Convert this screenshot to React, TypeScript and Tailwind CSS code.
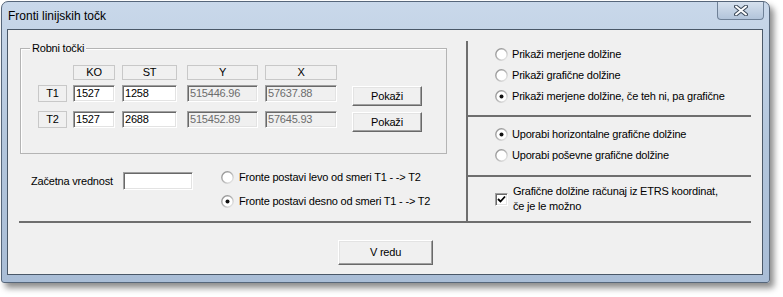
import React, { useId } from 'react';

const sunken =
  'border border-t-[#a0a0a0] border-l-[#a0a0a0] border-b-white border-r-white shadow-[inset_1px_1px_0_#696969,inset_-1px_-1px_0_#e3e3e3]';
const raised =
  'border border-t-white border-l-white border-b-[#696969] border-r-[#696969] shadow-[inset_-1px_-1px_0_#a0a0a0,inset_1px_1px_0_#e3e3e3] bg-[#f0f0f0]';

const Radio: React.FC<{ checked?: boolean }> = ({ checked }) => {
  const id = useId();
  return (
    <svg width="13" height="13" viewBox="0 0 13 13" className="shrink-0">
      <defs>
        <linearGradient id={id} x1="0" y1="0" x2="1" y2="1">
          <stop offset="0" stopColor="#8c8c8c" />
          <stop offset="0.5" stopColor="#b4b4b4" />
          <stop offset="1" stopColor="#f2f2f2" />
        </linearGradient>
      </defs>
      <circle cx="6.5" cy="6.5" r="5.7" fill="#fff" stroke={`url(#${id})`} strokeWidth="1.4" />
      {checked && <circle cx="6.5" cy="6.5" r="2" fill="#111" />}
    </svg>
  );
};

const Checkbox: React.FC = () => (
  <div className={`w-[13px] h-[13px] bg-white shrink-0 ${sunken} flex items-center justify-center`}>
    <svg width="9" height="9" viewBox="0 0 9 9">
      <path d="M1 4 L3.5 6.5 L8 1.5" fill="none" stroke="#000" strokeWidth="1.8" />
    </svg>
  </div>
);

const HeaderCell: React.FC<{ w: string; ml: string; children?: React.ReactNode }> = ({ w, ml, children }) => (
  <div className={`${w} ${ml} h-[15px] border border-[#c8c8c8] flex items-center justify-center leading-none`}>
    {children}
  </div>
);

const Field: React.FC<{ w: string; ml: string; value: string; disabled?: boolean }> = ({ w, ml, value, disabled }) => (
  <div
    className={`${w} ${ml} h-[17px] ${sunken} ${
      disabled ? 'bg-[#f0f0f0] text-[#6d6d6d]' : 'bg-white text-black'
    } flex items-center pl-[2px] leading-none`}
  >
    {value}
  </div>
);

const rows = [
  { label: 'T1', ko: '1527', st: '1258', y: '515446.96', x: '57637.88' },
  { label: 'T2', ko: '1527', st: '2688', y: '515452.89', x: '57645.93' },
];

export default function App() {
  return (
    <div className="w-[783px] h-[297px] bg-white font-['Liberation_Sans',Arial,sans-serif] text-[11px] tracking-[-0.2px] text-black overflow-hidden">
      <div className="ml-[1px] mt-[1px] w-[769px] h-[282px] rounded-t-[7px] rounded-b-[3px] border border-[#56667a] bg-gradient-to-b from-[#c9d8ea] via-[#b3c6dc] to-[#a9bdd6] shadow-[4px_5px_6px_rgba(0,0,0,0.45)] flex flex-col">
        {/* title bar */}
        <div className="h-[27px] flex items-start justify-between">
          <div className="pl-[6px] h-[27px] flex items-center text-[12px] tracking-normal text-black">Fronti linijskih točk</div>
          <div className="mr-[5px] w-[47px] h-[18px] rounded-b-[4px] border border-t-0 border-[#6f8197] bg-gradient-to-b from-[#d6e1ee] to-[#b2c4da] flex items-center justify-center">
            <svg width="14" height="11" viewBox="0 0 14 11">
              <path d="M2 1.5 L12 9.5 M12 1.5 L2 9.5" stroke="#3d4a5a" strokeWidth="4" strokeLinecap="round" />
              <path d="M2 1.5 L12 9.5 M12 1.5 L2 9.5" stroke="#fff" strokeWidth="2" strokeLinecap="round" />
            </svg>
          </div>
        </div>

        {/* client area */}
        <div className="ml-[5px] mr-[6px] h-[246px] border border-[#4a5868] bg-[#f0f0f0] flex flex-col">
          <div className="h-[191px] flex items-start">
            {/* left part */}
            <div className="w-[458px] flex flex-col">
              <div className="relative ml-[12px] mt-[18px] w-[427px] h-[106px] border border-[#b4b4b4] shadow-[inset_1px_1px_0_#fff]">
                <span className="absolute -top-[8px] left-[9px] px-[2px] bg-[#f0f0f0] leading-[14px]">Robni točki</span>
                <div className="mt-[16px] ml-[17px] flex">
                  <div className="w-[29px]" />
                  <HeaderCell w="w-[42px]" ml="ml-[6px]">KO</HeaderCell>
                  <HeaderCell w="w-[55px]" ml="ml-[7px]">ST</HeaderCell>
                  <HeaderCell w="w-[71px]" ml="ml-[10px]">Y</HeaderCell>
                  <HeaderCell w="w-[72px]" ml="ml-[7px]">X</HeaderCell>
                </div>
                {rows.map((r) => (
                  <div key={r.label} className="mt-[5px] ml-[17px] flex items-start">
                    <div className="w-[29px] h-[17px] border border-[#c8c8c8] flex items-center justify-center leading-none">
                      {r.label}
                    </div>
                    <Field w="w-[42px]" ml="ml-[6px]" value={r.ko} />
                    <Field w="w-[55px]" ml="ml-[7px]" value={r.st} />
                    <Field w="w-[71px]" ml="ml-[10px]" value={r.y} disabled />
                    <Field w="w-[72px]" ml="ml-[7px]" value={r.x} disabled />
                    <button className={`ml-[15px] mt-[1px] w-[70px] h-[20px] ${raised} leading-none`}>Pokaži</button>
                  </div>
                ))}
              </div>

              <div className="mt-[16px] flex items-start">
                <div className="ml-[23px] mt-[2px] flex items-center">
                  <span className="w-[92px]">Začetna vrednost</span>
                  <div className={`w-[70px] h-[18px] bg-white ${sunken}`} />
                </div>
                <div className="ml-[28px] mt-[1px] flex flex-col gap-[11px]">
                  <div className="h-[13px] flex items-center gap-[5px]">
                    <Radio />
                    <span>Fronte postavi levo od smeri T1 - -&gt; T2</span>
                  </div>
                  <div className="h-[13px] flex items-center gap-[5px]">
                    <Radio checked />
                    <span>Fronte postavi desno od smeri T1 - -&gt; T2</span>
                  </div>
                </div>
              </div>
            </div>

            {/* vertical divider */}
            <div className="w-[2px] mt-[11px] h-[182px] bg-[#6e6e6e]" />

            {/* right part */}
            <div className="flex-1 flex flex-col">
              <div className="mt-[18px] ml-[27px] flex flex-col gap-[8px]">
                <div className="h-[13px] flex items-center gap-[4px]">
                  <Radio />
                  <span>Prikaži merjene dolžine</span>
                </div>
                <div className="h-[13px] flex items-center gap-[4px]">
                  <Radio />
                  <span>Prikaži grafične dolžine</span>
                </div>
                <div className="h-[13px] flex items-center gap-[4px]">
                  <Radio checked />
                  <span>Prikaži merjene dolžine, če teh ni, pa grafične</span>
                </div>
              </div>
              <div className="mt-[12px] w-[283px] h-[2px] bg-[#6e6e6e]" />
              <div className="mt-[11px] ml-[27px] flex flex-col gap-[8px]">
                <div className="h-[13px] flex items-center gap-[4px]">
                  <Radio checked />
                  <span>Uporabi horizontalne grafične dolžine</span>
                </div>
                <div className="h-[13px] flex items-center gap-[4px]">
                  <Radio />
                  <span>Uporabi poševne grafične dolžine</span>
                </div>
              </div>
              <div className="mt-[13px] w-[283px] h-[2px] bg-[#6e6e6e]" />
              <div className="mt-[7px] ml-[27px] flex items-center gap-[5px]">
                <Checkbox />
                <span className="leading-[15px]">
                  Grafične dolžine računaj iz ETRS koordinat,
                  <br />
                  če je le možno
                </span>
              </div>
            </div>
          </div>

          <div className="ml-[11px] w-[732px] h-[2px] bg-[#6e6e6e]" />

          <div className="mt-[17px] ml-[330px]">
            <button className={`w-[95px] h-[25px] ${raised} leading-none`}>V redu</button>
          </div>
        </div>
      </div>
    </div>
  );
}
